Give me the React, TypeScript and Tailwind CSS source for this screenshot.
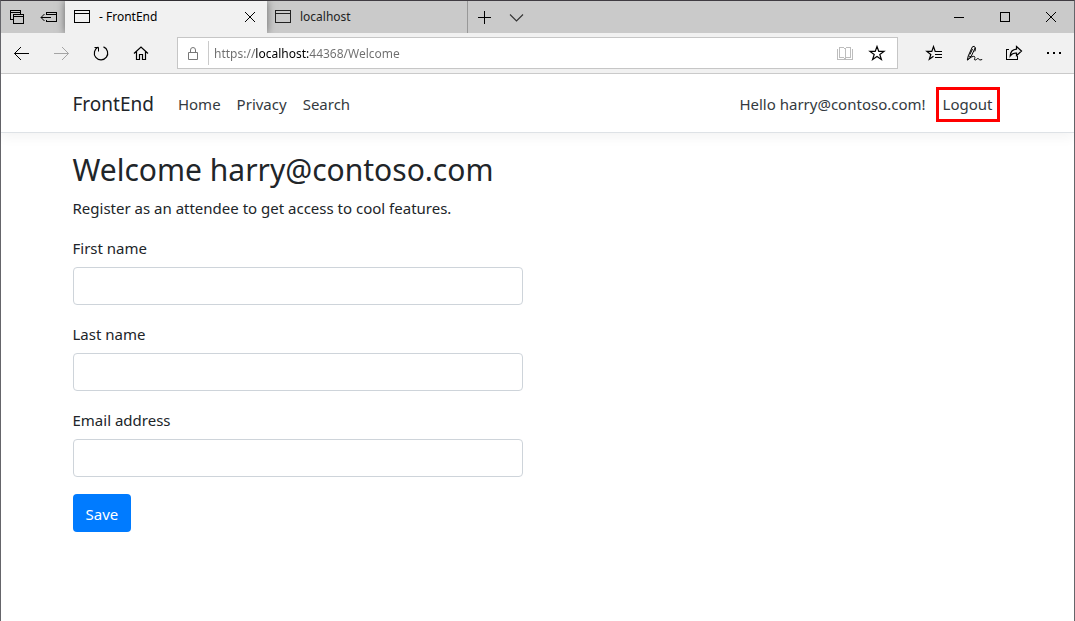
import type { ReactNode } from "react";

type IconProps = { children: ReactNode; crisp?: boolean };

function Icon({ children, crisp = false }: IconProps) {
  return (
    <svg
      width="24"
      height="24"
      viewBox="0 0 24 24"
      fill="none"
      stroke="currentColor"
      strokeWidth="1"
      shapeRendering={crisp ? "crispEdges" : "auto"}
      aria-hidden="true"
      className="shrink-0"
    >
      {children}
    </svg>
  );
}

type ChromeButtonProps = { label: string; className: string; children: ReactNode };

function ChromeButton({ label, className, children }: ChromeButtonProps) {
  return (
    <button type="button" aria-label={label} className={`flex shrink-0 items-center justify-center ${className}`}>
      {children}
    </button>
  );
}

function PageIcon() {
  return (
    <Icon crisp>
      <path d="M4.5 5.5h15v12h-15zM4.5 8.5h15" />
    </Icon>
  );
}

function CloseIcon() {
  return (
    <Icon>
      <path d="M7 7l10 10M17 7L7 17" />
    </Icon>
  );
}

function TabStrip() {
  return (
    <div className="flex h-8 bg-[#cacaca] text-[12px] text-black">
      <ChromeButton label="Tabs you've set aside" className="w-8">
        <Icon crisp>
          <path d="M8.5 14.5h-3v-9h10v4M5.5 7.5h10M8.5 9.5h10v9h-10zM8.5 11.5h10" />
        </Icon>
      </ChromeButton>
      <ChromeButton label="Set these tabs aside" className="w-8">
        <Icon>
          <path shapeRendering="crispEdges" d="M9.5 10V7.5h10v9h-10V15M9.5 9.5h10M4 12.5h10" />
          <path d="M7.5 9L4 12.5L7.5 16" />
        </Icon>
      </ChromeButton>
      <div className="relative z-10 flex w-[202px] items-center bg-[#f1f1f1] pl-[5px] pr-[5px] shadow-[0_0_8px_rgba(0,0,0,0.5)]">
        <PageIcon />
        <span className="ml-[5px] flex-1">- FrontEnd</span>
        <ChromeButton label="Close tab" className="w-6">
          <CloseIcon />
        </ChromeButton>
      </div>
      <div className="flex w-[201px] items-center border-r border-[#989898] pl-1 text-[#222]">
        <PageIcon />
        <span className="ml-[5px]">localhost</span>
      </div>
      <ChromeButton label="New tab" className="w-8">
        <Icon crisp>
          <path d="M12.5 6v13M6 12.5h13" />
        </Icon>
      </ChromeButton>
      <ChromeButton label="Show tab previews" className="w-8 text-[#333]">
        <Icon>
          <path strokeWidth="1.1" d="M6 9.5l6.5 6.5L19 9.5" />
        </Icon>
      </ChromeButton>
      <div className="ml-auto flex">
        <ChromeButton label="Minimize" className="w-[46px]">
          <Icon crisp>
            <path d="M7 12.5h10" />
          </Icon>
        </ChromeButton>
        <ChromeButton label="Maximize" className="w-[46px]">
          <Icon crisp>
            <path d="M7.5 7.5h9v9h-9z" />
          </Icon>
        </ChromeButton>
        <ChromeButton label="Close window" className="w-[46px]">
          <CloseIcon />
        </ChromeButton>
      </div>
    </div>
  );
}

function Toolbar() {
  return (
    <div className="relative z-20 flex h-[41px] items-center border-b border-[#cacaca] bg-[#f1f1f1] text-black">
      <ChromeButton label="Back" className="w-10">
        <Icon>
          <path d="M5.5 12.5H20M12 6l-6.5 6.5L12 19" />
        </Icon>
      </ChromeButton>
      <ChromeButton label="Forward" className="w-10 text-[#a5a5a5]">
        <Icon>
          <path d="M5 12.5h14.5M13 6l6.5 6.5L13 19" />
        </Icon>
      </ChromeButton>
      <ChromeButton label="Refresh" className="w-10">
        <Icon>
          <path strokeWidth="1.2" d="M14.5 5.9A6.7 6.7 0 1 1 9.3 6" />
          <path d="M5.5 6.5h4v4" />
        </Icon>
      </ChromeButton>
      <ChromeButton label="Home" className="w-10">
        <Icon>
          <path strokeWidth="1.2" d="M5 12.5l7-6.5l7 6.5M7.5 10.5v8h3v-5h3v5h3v-8" />
        </Icon>
      </ChromeButton>
      <div className="mx-4 flex h-8 flex-1 items-center border border-[#c6c6c6] bg-white pl-[3px] pr-1">
        <span className="mr-[3px] text-[#777]">
          <Icon>
            <path d="M7.5 11.5h9v7h-9zM9.5 11.5V9a2.5 2.5 0 0 1 5 0v2.5" />
          </Icon>
        </span>
        <input
          type="text"
          aria-label="Address"
          defaultValue="https://localhost:44368/Welcome"
          className="h-6 min-w-0 flex-1 border-l border-[#cacaca] bg-[linear-gradient(90deg,#6e6e6e_47px,#000_47px,#000_100px,#6e6e6e_100px)] bg-clip-text pl-[5px] text-[12px] text-transparent outline-none"
        />
        <ChromeButton label="Reading view" className="w-8 text-[#bdbdbd]">
          <Icon crisp>
            <path d="M4.5 7.5v11h15v-11M6.5 6.5h4l1.5 1l1.5-1h4v10h-4l-1.5 1l-1.5-1h-4zM12.5 7v11" />
          </Icon>
        </ChromeButton>
        <ChromeButton label="Add to favorites" className="w-8">
          <Icon>
            <path strokeWidth="1.2" d="M12 5.5l1.8 4.9h5.2l-4.2 3.1l1.6 5L12 15.4l-4.4 3.1l1.6-5L5 10.4h5.2z" />
          </Icon>
        </ChromeButton>
      </div>
      <ChromeButton label="Favorites" className="w-10">
        <Icon>
          <path strokeWidth="1.2" d="M14.5 10.5h-1.3L11.5 5.5L9.8 10.4H4.9l3.9 3l-1.5 4.9l4.2-3" />
          <path shapeRendering="crispEdges" d="M13 10.5h7M13 13.5h7M13 16.5h7" />
        </Icon>
      </ChromeButton>
      <ChromeButton label="Add notes" className="w-10">
        <Icon>
          <path d="M5.3 19l1-4.2L10.4 5.8q2.2-1.6 2.8 1L9 15.8L5.3 19M6.3 14.8L9 15.8M10.5 8l-2.6 5.5M13.2 6.5q.8 1.5-.4 4" />
          <path d="M5.5 19q5-4.5 7-3.5c1.4.8-1.3 3.500.6 3.500c1.400 0 1.900-1.500 2.900-1.500s1 1.500 2 1.500s1-.5 2.200-.5" />
        </Icon>
      </ChromeButton>
      <ChromeButton label="Share" className="w-10">
        <Icon>
          <path strokeWidth="1.2" d="M14.5 5.5l5 4.5l-5 4.600v-2.600c-3-.2-4.700.7-6.300 3c.2-4 2.300-6.600 6.300-6.900z" />
          <path shapeRendering="crispEdges" d="M7 8.500h-2.500v10h11V15" />
        </Icon>
      </ChromeButton>
      <ChromeButton label="Settings and more" className="w-10">
        <Icon crisp>
          <path fill="currentColor" stroke="none" d="M5 11h2v2H5zM11 11h2v2h-2zM17 11h2v2h-2z" />
        </Icon>
      </ChromeButton>
    </div>
  );
}

function SiteHeader() {
  return (
    <header className="border-b border-[#dee2e6] shadow-[0_4px_12px_rgba(0,0,0,0.05)]">
      <nav className="mx-auto flex h-[58px] max-w-[960px] items-center pl-[15px] pr-[18px] pt-0.5 text-[#343a40]">
        <a href="/" className="text-[19px] text-[#212529]">
          FrontEnd
        </a>
        <div className="ml-6 flex gap-4">
          <a href="/">Home</a>
          <a href="/Privacy">Privacy</a>
          <a href="/Search">Search</a>
        </div>
        <a href="/Account/Manage" className="ml-auto">
          Hello harry@contoso.com!
        </a>
        <button type="button" className="ml-2.5 h-[35px] border-3 border-[#ff0000] px-1">
          Logout
        </button>
      </nav>
    </header>
  );
}

type FieldProps = { id: string; label: string; type: string };

function Field({ id, label, type }: FieldProps) {
  return (
    <div className="mb-[17px]">
      <label htmlFor={id} className="mb-[7px] block">
        {label}
      </label>
      <input
        id={id}
        name={id}
        type={type}
        className="block h-[38px] w-full rounded border border-[#ced4da] bg-white px-3"
      />
    </div>
  );
}

export default function App() {
  return (
    <div className="min-h-screen border-x border-t border-x-[#65656a] border-t-[#403c42] bg-white font-['Noto_Sans','Open_Sans',sans-serif]">
      <TabStrip />
      <Toolbar />
      <div className="text-[15px] leading-6 text-[#212529]">
        <SiteHeader />
        <main className="mx-auto max-w-[960px] px-[15px] pt-[18px]">
          <h1 className="mb-[7px] text-[30px] leading-[38px]">Welcome harry@contoso.com</h1>
          <p className="mb-4">Register as an attendee to get access to cool features.</p>
          <form className="w-full md:w-[450px]">
            <Field id="firstName" label="First name" type="text" />
            <Field id="lastName" label="Last name" type="text" />
            <Field id="email" label="Email address" type="email" />
            <button type="submit" className="h-[38px] rounded bg-[#007bff] px-[13px] pt-0.5 text-white">
              Save
            </button>
          </form>
        </main>
      </div>
    </div>
  );
}
